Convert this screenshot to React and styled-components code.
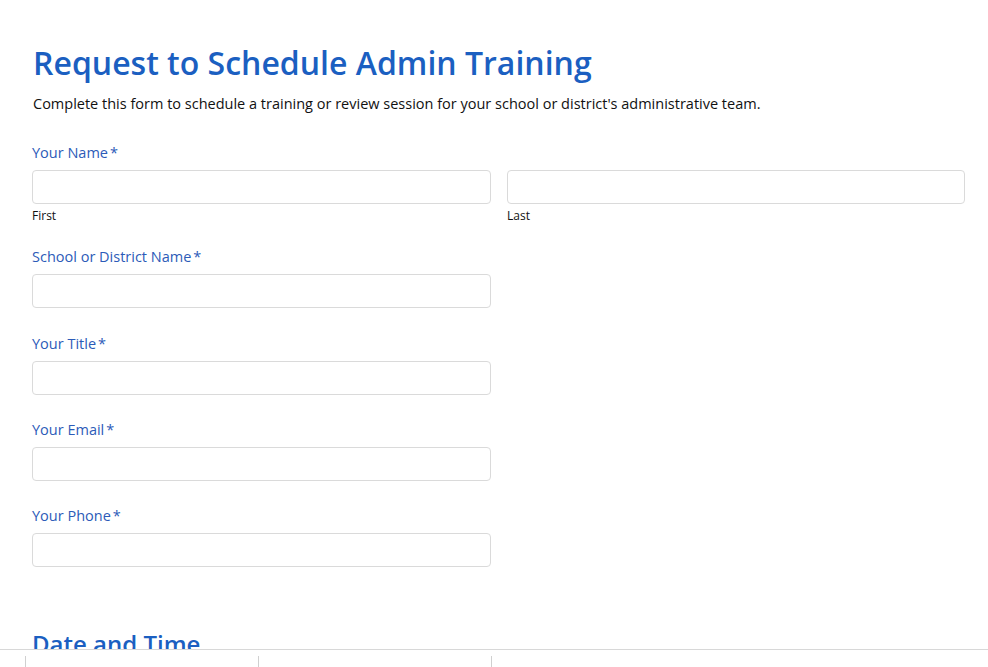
import React from "react";
import styled, { createGlobalStyle } from "styled-components";

const Global = createGlobalStyle`
  html, body { margin: 0; padding: 0; background: #fff; }
  body { font-family: "Open Sans", "Noto Sans", sans-serif; overflow: hidden; }
  * { box-sizing: border-box; }
`;

const Page = styled.div`
  padding: 40px 23px 0 32px;
  height: 667px;
  overflow: hidden;
`;

const Title = styled.h1`
  margin: 0;
  font-size: 32px;
  font-weight: 600;
  line-height: 46px;
  color: #1b5fc1;
  letter-spacing: 0px;
  padding-left: 1px;
`;

const Description = styled.p`
  margin: 8px 0 0;
  font-size: 14.5px;
  line-height: 20px;
  color: #111;
  padding-left: 1px;
`;

const Field = styled.div`
  margin-top: ${(p) => p.$top || 25}px;
`;

const Label = styled.div`
  font-size: 14.5px;
  line-height: 20px;
  color: #2c5bb8;
  margin-bottom: 7px;
`;

const Req = styled.span`
  margin-left: 2px;
`;

const Row = styled.div`
  display: flex;
  gap: 16px;
`;

const Col = styled.div`
  width: ${(p) => p.$w}px;
`;

const Input = styled.input`
  display: block;
  width: 100%;
  height: 34px;
  border: 1px solid #dadada;
  border-radius: 4px;
  background: #fff;
  outline: none;
  font: inherit;
`;

const Sub = styled.div`
  font-size: 12px;
  line-height: 16px;
  margin-top: 4px;
  color: #111;
`;

const Section = styled.h2`
  margin: 60px 0 0;
  font-size: 24px;
  font-weight: 600;
  line-height: 34px;
  color: #1b5fc1;
`;

const Footer = styled.div`
  position: fixed;
  left: 0;
  right: 0;
  bottom: 0;
  height: 18px;
  background: #fff;
  border-top: 1px solid #d8d8d8;
  display: flex;
  padding: 6px 0 0 25px;
`;

const FootCell = styled.div`
  width: 233px;
  border-left: 1px solid #d0d0d0;
  height: 12px;
`;

function SingleField({ label, top }) {
  return (
    <Field $top={top}>
      <Label>
        {label}
        <Req>*</Req>
      </Label>
      <Col $w={459}>
        <Input />
      </Col>
    </Field>
  );
}

export default function App() {
  return (
    <>
      <Global />
      <Page>
        <Title>Request to Schedule Admin Training</Title>
        <Description>
          Complete this form to schedule a training or review session for your
          school or district's administrative team.
        </Description>
        <Field $top={29}>
          <Label>
            Your Name<Req>*</Req>
          </Label>
          <Row>
            <Col $w={459}>
              <Input />
              <Sub>First</Sub>
            </Col>
            <Col $w={458}>
              <Input />
              <Sub>Last</Sub>
            </Col>
          </Row>
        </Field>
        <SingleField label="School or District Name" top={23} />
        <SingleField label="Your Title" top={26} />
        <SingleField label="Your Email" top={25} />
        <SingleField label="Your Phone" top={25} />
        <Section>Date and Time</Section>
      </Page>
      <Footer>
        <FootCell />
        <FootCell />
        <FootCell />
      </Footer>
    </>
  );
}
